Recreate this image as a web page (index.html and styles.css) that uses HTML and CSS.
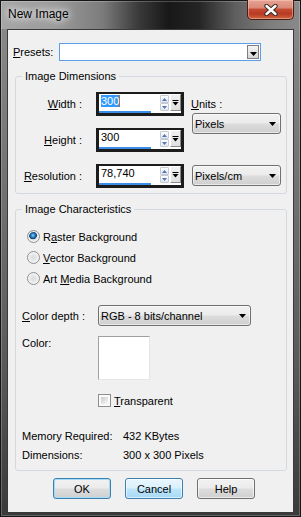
FILE: index.html
```html
<!DOCTYPE html>
<html>
<head>
<meta charset="utf-8">
<title>New Image</title>
<link rel="stylesheet" href="styles.css">
</head>
<body>
<div class="window">
  <div class="titlebar">
    <span class="title">New Image</span>
    <div class="close">
      <svg width="14" height="12" viewBox="0 0 14 12"><path d="M2.5 2 L11.5 10 M11.5 2 L2.5 10" stroke="#3b2a26" stroke-width="4.4" stroke-linecap="round"/><path d="M2.5 2 L11.5 10 M11.5 2 L2.5 10" stroke="#ffffff" stroke-width="2.4" stroke-linecap="round"/></svg>
    </div>
  </div>
  <div class="client">
    <div class="presets">
      <span class="presets-label"><u>P</u>resets:</span>
      <div class="combo">
        <span class="combo-field"></span>
        <span class="combo-btn"><svg width="7" height="4" viewBox="0 0 7 4"><path d="M0 0h7L3.5 4z" fill="#000"/></svg></span>
      </div>
    </div>

    <fieldset class="group group-dims">
      <legend>Image Dimensions</legend>
      <div class="dims">
        <div class="dims-fields">
          <div class="field">
            <span class="field-label"><u>W</u>idth :</span>
            <div class="spin-edit">
              <div class="edit-area"><span class="edit-text"><span class="sel">300</span></span><span class="edit-bar"></span></div>
              <div class="spin">
                <span class="spin-btn"><svg width="5" height="3" viewBox="0 0 5 3"><path d="M0 3h5L2.5 0z" fill="#5576b4"/></svg></span>
                <span class="spin-btn"><svg width="5" height="3" viewBox="0 0 5 3"><path d="M0 0h5L2.5 3z" fill="#5576b4"/></svg></span>
              </div>
              <span class="mini-btn"><svg width="7" height="6" viewBox="0 0 7 6"><path d="M0.5 0.5h6" stroke="#000" stroke-width="1"/><path d="M0.5 2h6L3.5 5.5z" fill="#000"/></svg></span>
            </div>
          </div>
          <div class="field">
            <span class="field-label"><u>H</u>eight :</span>
            <div class="spin-edit">
              <div class="edit-area"><span class="edit-text">300</span><span class="edit-bar"></span></div>
              <div class="spin">
                <span class="spin-btn"><svg width="5" height="3" viewBox="0 0 5 3"><path d="M0 3h5L2.5 0z" fill="#5576b4"/></svg></span>
                <span class="spin-btn"><svg width="5" height="3" viewBox="0 0 5 3"><path d="M0 0h5L2.5 3z" fill="#5576b4"/></svg></span>
              </div>
              <span class="mini-btn"><svg width="7" height="6" viewBox="0 0 7 6"><path d="M0.5 0.5h6" stroke="#000" stroke-width="1"/><path d="M0.5 2h6L3.5 5.5z" fill="#000"/></svg></span>
            </div>
          </div>
          <div class="field">
            <span class="field-label"><u>R</u>esolution :</span>
            <div class="spin-edit">
              <div class="edit-area"><span class="edit-text">78,740</span><span class="edit-bar"></span></div>
              <div class="spin">
                <span class="spin-btn"><svg width="5" height="3" viewBox="0 0 5 3"><path d="M0 3h5L2.5 0z" fill="#5576b4"/></svg></span>
                <span class="spin-btn"><svg width="5" height="3" viewBox="0 0 5 3"><path d="M0 0h5L2.5 3z" fill="#5576b4"/></svg></span>
              </div>
              <span class="mini-btn"><svg width="7" height="6" viewBox="0 0 7 6"><path d="M0.5 0.5h6" stroke="#000" stroke-width="1"/><path d="M0.5 2h6L3.5 5.5z" fill="#000"/></svg></span>
            </div>
          </div>
        </div>
        <div class="dims-units">
          <span class="units-label"><u>U</u>nits :</span>
          <div class="dropdown dd-units"><span>Pixels</span><svg width="7" height="4" viewBox="0 0 7 4"><path d="M0 0h7L3.5 4z" fill="#000"/></svg></div>
          <div class="dropdown dd-res"><span>Pixels/cm</span><svg width="7" height="4" viewBox="0 0 7 4"><path d="M0 0h7L3.5 4z" fill="#000"/></svg></div>
        </div>
      </div>
    </fieldset>

    <fieldset class="group group-chars">
      <legend>Image Characteristics</legend>
      <div class="chars">
        <div class="radios">
          <div class="radio-row"><span class="radio checked"></span><span>R<u>a</u>ster Background</span></div>
          <div class="radio-row"><span class="radio"></span><span><u>V</u>ector Background</span></div>
          <div class="radio-row"><span class="radio"></span><span>Art <u>M</u>edia Background</span></div>
        </div>
        <div class="depth-row">
          <span class="row-label"><u>C</u>olor depth :</span>
          <div class="dropdown dd-depth"><span>RGB - 8 bits/channel</span><svg width="7" height="4" viewBox="0 0 7 4"><path d="M0 0h7L3.5 4z" fill="#000"/></svg></div>
        </div>
        <div class="color-row">
          <span class="row-label">Color:</span>
          <div class="swatch"></div>
        </div>
        <div class="check-row"><span class="check"></span><span><u>T</u>ransparent</span></div>
        <div class="info">
          <span>Memory Required:</span><span>432 KBytes</span>
          <span>Dimensions:</span><span>300 x 300 Pixels</span>
        </div>
      </div>
    </fieldset>

    <div class="buttons">
      <button class="btn btn-default">OK</button>
      <button class="btn btn-hover">Cancel</button>
      <button class="btn">Help</button>
    </div>
  </div>
</div>
</body>
</html>
```

FILE: styles.css
```css
* { box-sizing: border-box; }
html, body { margin: 0; padding: 0; }
body {
  width: 301px;
  height: 517px;
  overflow: hidden;
  font-family: "Liberation Sans", Arial, sans-serif;
  font-size: 11px;
  color: #000;
}
u { text-decoration: underline; text-underline-offset: 1px; }

.window {
  width: 301px;
  height: 517px;
  display: flex;
  flex-direction: column;
  background:
    linear-gradient(90deg, #a6a6a6 0%, #9c9c9c 18%, #7c7c7c 34%, #3a3a3a 46%, #181818 56%, #242424 66%, #5e5e5e 78%, #7e7e7e 90%, #8a8a8a 100%) top / 100% 29px no-repeat,
    linear-gradient(180deg, #8c8c8c 0%, #767676 30%, #5a5a5a 70%, #3a3a3a 100%);
  box-shadow: inset 0 0 0 1px #161616, inset 0 0 0 2px rgba(255,255,255,0.22);
}

.titlebar {
  height: 29px;
  display: flex;
  justify-content: space-between;
  align-items: flex-start;
  padding: 0 7px 0 8px;
}
.title {
  margin-top: 7px;
  font-size: 12px;
  line-height: 15px;
  color: #000;
  text-shadow: 0 0 6px #fff, 0 0 10px rgba(255,255,255,0.9);
}
.close {
  width: 47px;
  height: 20px;
  border: 1px solid #4a1d15;
  border-top: none;
  border-radius: 0 0 5px 5px;
  background: linear-gradient(180deg, #e7a394 0%, #db8a78 40%, #c34a33 50%, #b83a24 72%, #d0653f 100%);
  box-shadow: inset 0 0 0 1px rgba(255,210,200,0.45);
  display: flex;
  align-items: center;
  justify-content: center;
}

.client {
  margin-left: 7px;
  width: 287px;
  height: 484px;
  border: 1px solid #3a3a3a;
  background: #f0f0f0;
  display: flex;
  flex-direction: column;
  padding-top: 13px;
}

/* Presets */
.presets {
  display: flex;
  align-items: center;
  height: 18px;
  padding-left: 5px;
}
.presets-label { width: 46px; line-height: 14px; }
.combo {
  width: 202px;
  height: 18px;
  border: 1px solid #5a9fe6;
  background: #fff;
  display: flex;
  padding: 1px 1px 1px 2px;
}
.combo-field { flex: 1; }
.combo-btn {
  width: 12px;
  height: 14px;
  border: 1px solid #7d7d7d;
  background: linear-gradient(180deg, #f6f6f6 0%, #e4e4e4 50%, #d6d6d6 100%);
  display: flex;
  align-items: center;
  justify-content: center;
  padding-top: 3px;
}

/* group boxes */
.group {
  margin: 8px 0 0 7px;
  width: 272px;
  padding: 0;
  border: 1px solid #d3d9de;
  border-radius: 3px;
  min-width: 0;
}
.group legend {
  margin-left: 6px;
  padding: 0 3px;
  line-height: 14px;
}

.dims {
  display: flex;
  padding: 9px 0 5px 0;
}
.dims-fields {
  display: flex;
  flex-direction: column;
  gap: 12px;
}
.field {
  display: flex;
  align-items: center;
  height: 24px;
}
.field-label {
  width: 66px;
  text-align: right;
  line-height: 14px;
}
.spin-edit {
  margin-left: 14px;
  width: 88px;
  height: 24px;
  border: 3px solid #1c1c1c;
  border-top-width: 2px;
  background: #fff;
  display: flex;
}
.edit-area {
  flex: 1;
  display: flex;
  flex-direction: column;
  justify-content: space-between;
}
.edit-text {
  padding: 1px 0 0 2px;
  line-height: 13px;
}
.sel {
  background: #3399ff;
  color: #fff;
  border-right: 1px solid #b06a30;
}
.edit-bar {
  width: 52px;
  height: 2px;
  background: #3b8ee8;
}
.spin {
  width: 9px;
  margin-left: 1px;
  display: flex;
  flex-direction: column;
  padding-top: 1px;
}
.spin-btn {
  width: 9px;
  height: 8px;
  border: 1px solid #c3cad3;
  border-radius: 1px;
  background: linear-gradient(180deg, #fdfdfd 0%, #e3e9f0 100%);
  display: flex;
  align-items: center;
  justify-content: center;
}
.mini-btn {
  width: 11px;
  height: 17px;
  margin-left: 1px;
  border: 1px solid;
  border-color: #ffffff #8a8a8a #8a8a8a #ffffff;
  background: linear-gradient(180deg, #f0f0f0 0%, #e0e0e0 100%);
  display: flex;
  align-items: center;
  justify-content: center;
}

.dims-units {
  margin-left: 7px;
  display: flex;
  flex-direction: column;
  padding-top: 5px;
}
.units-label { line-height: 14px; }
.dropdown {
  height: 21px;
  border: 1px solid #707070;
  border-radius: 3px;
  background: linear-gradient(180deg, #f2f2f2 0%, #ebebeb 49%, #dddddd 51%, #cfcfcf 100%);
  box-shadow: inset 0 0 0 1px rgba(255,255,255,0.55);
  display: flex;
  align-items: center;
  justify-content: space-between;
  padding: 0 4px 0 2px;
  line-height: 14px;
}
.dd-units { width: 89px; margin: 2px 0 0 1px; }
.dd-res { width: 89px; margin: 31px 0 0 1px; }

/* characteristics */
.chars {
  display: flex;
  flex-direction: column;
  padding: 10px 0 6px 6px;
}
.radios { display: flex; flex-direction: column; padding-left: 5px; }
.radio-row {
  height: 21px;
  display: flex;
  align-items: center;
  gap: 3px;
  line-height: 14px;
}
.radio {
  width: 13px;
  height: 13px;
  border-radius: 50%;
  border: 1px solid #8d8f91;
  background: radial-gradient(circle at 50% 50%, #d9dbdd 0%, #e8e9ea 45%, #f7f7f7 100%);
  box-shadow: inset 0 0 0 1px #f4f4f4;
}
.radio.checked {
  background: radial-gradient(circle at 45% 40%, #9ad5f7 0px, #3b8fcf 1.5px, #16578f 3px, #0f3f6d 3.6px, #dfe3e6 4.2px, #f4f4f4 100%);
}
.row-label { width: 76px; line-height: 14px; }
.depth-row {
  margin-top: 16px;
  display: flex;
  align-items: center;
}
.dd-depth { width: 153px; }
.color-row {
  margin-top: 10px;
  display: flex;
  align-items: flex-start;
}
.swatch {
  width: 52px;
  height: 44px;
  background: #fff;
  border: 1px solid;
  border-color: #a0a0a0 #e6e6e6 #e6e6e6 #a0a0a0;
}
.check-row {
  margin: 14px 0 0 76px;
  height: 13px;
  display: flex;
  align-items: center;
  gap: 3px;
  line-height: 14px;
}
.check {
  width: 13px;
  height: 13px;
  border: 1px solid #8e8f8f;
  padding: 2px;
  background:
    linear-gradient(135deg, #c7cace 0%, #e4e5e7 55%, #f6f6f6 100%) content-box,
    linear-gradient(#fbfbfb, #fbfbfb) border-box;
}
.info {
  margin-top: 19px;
  display: grid;
  grid-template-columns: 101px auto;
  grid-auto-rows: 19px;
  align-items: center;
  line-height: 14px;
}

/* buttons */
.buttons {
  margin: 7px 0 0 45px;
  display: flex;
  gap: 14px;
}
.btn {
  width: 58px;
  height: 21px;
  padding: 0;
  font: inherit;
  color: #000;
  border: 1px solid #707070;
  border-radius: 3px;
  background: linear-gradient(180deg, #f2f2f2 0%, #ebebeb 49%, #dddddd 51%, #cfcfcf 100%);
  box-shadow: inset 0 0 0 1px rgba(255,255,255,0.6);
}
.btn-default {
  border-color: #3c7fb1;
  box-shadow: inset 0 0 0 1px #a5dcf7;
}
.btn-hover {
  border-color: #3c7fb1;
  background: linear-gradient(180deg, #eaf6fd 0%, #d9f0fc 49%, #bee6fd 51%, #a7d9f5 100%);
  box-shadow: inset 0 0 0 1px rgba(255,255,255,0.6);
}
```
